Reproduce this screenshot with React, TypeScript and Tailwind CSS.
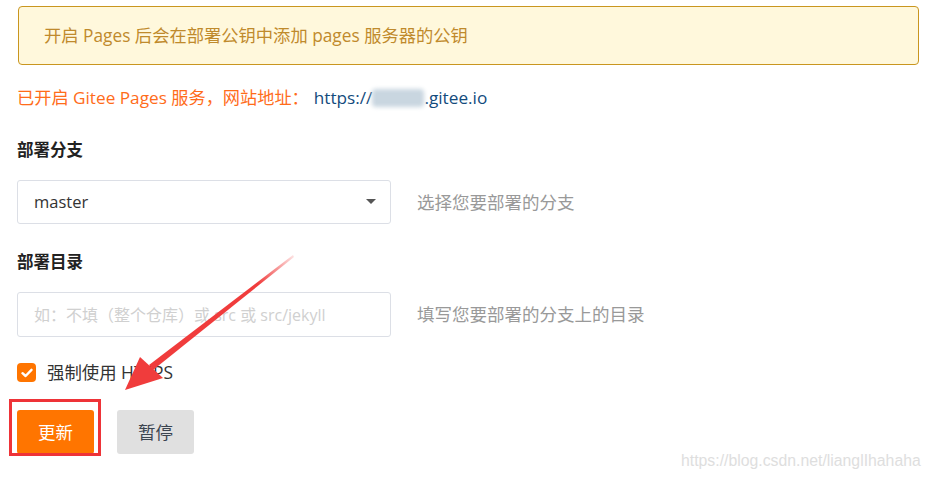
import React from "react";

const font = { fontFamily: '"Open Sans", "Noto Sans", "Noto Sans CJK SC", sans-serif' };

function Arrow() {
  return (
    <svg className="absolute left-0 top-0 pointer-events-none" width={931} height={478} viewBox="0 0 931 478">
      <defs>
        <linearGradient id="fade" x1="293" y1="255" x2="150" y2="368" gradientUnits="userSpaceOnUse">
          <stop offset="0" stopColor="#f03c3c" stopOpacity="0.15" />
          <stop offset="0.25" stopColor="#f03c3c" stopOpacity="1" />
          <stop offset="1" stopColor="#f03c3c" />
        </linearGradient>
      </defs>
      <polygon points="293,255 294,257 153,370 149,365" fill="url(#fade)" />
      <polygon points="125,390 140,357 163,378" fill="#f03c3c" />
    </svg>
  );
}

export default function App() {
  return (
    <div className="relative w-[931px] h-[478px] bg-white overflow-hidden" style={font}>
      <div className="flex flex-col pl-[17px] pr-[12px] pt-[6px]">
        {/* notice */}
        <div className="ml-px h-[59px] rounded-[4px] border border-[#c9961f] bg-[#fff8dc] flex items-center pl-[25px] text-[17.3px] text-[#bf8a2c]">
          开启 Pages 后会在部署公钥中添加 pages 服务器的公钥
        </div>

        {/* status */}
        <div className="mt-[21px] h-6 flex items-center text-[17.2px] leading-6">
          <span className="text-[#ff6c1a]">已开启 Gitee Pages 服务，网站地址：</span>
          <span className="ml-[5px] text-[#134b7d]">https://</span>
          <span className="inline-block w-[52px] h-[18px] bg-[#c9d6e0] blur-[2px] rounded-sm" />
          <span className="text-[#134b7d]">.gitee.io</span>
        </div>

        {/* branch */}
        <div className="mt-[28px] h-6 leading-6 text-[16.5px] font-bold text-[#222]">部署分支</div>
        <div className="mt-[18px] flex items-center">
          <div className="w-[374px] h-[44px] border border-[#dcdfe6] rounded-[3px] flex items-center justify-between pl-[16px] pr-[14px] text-[16.5px] text-[#333]">
            <span>master</span>
            <svg width="10" height="6" viewBox="0 0 10 6">
              <polygon points="0,0 10,0 5,5" fill="#555" />
            </svg>
          </div>
          <span className="ml-[26px] text-[17.5px] text-[#999]">选择您要部署的分支</span>
        </div>

        {/* directory */}
        <div className="mt-[26px] h-6 leading-6 text-[16.5px] font-bold text-[#222]">部署目录</div>
        <div className="mt-[18px] flex items-center">
          <div className="w-[374px] h-[45px] border border-[#dcdfe6] rounded-[3px] flex items-center pl-[16px] text-[16px] text-[#d0d0d0]">
            如：不填（整个仓库）或 src 或 src/jekyll
          </div>
          <span className="ml-[26px] text-[17.5px] text-[#999]">填写您要部署的分支上的目录</span>
        </div>

        {/* https */}
        <div className="mt-[26px] flex items-center h-[19px]">
          <div className="w-[19px] h-[19px] rounded-[4px] bg-[#ff7500] flex items-center justify-center">
            <svg width="12" height="10" viewBox="0 0 12 10">
              <path d="M1.5 5.2 L4.6 8 L10.5 1.8" stroke="#fff" strokeWidth="2.4" fill="none" strokeLinecap="round" strokeLinejoin="round" />
            </svg>
          </div>
          <span className="ml-[11px] text-[17.4px] text-[#333]">强制使用 HTTPS</span>
        </div>

        {/* actions */}
        <div className="mt-[28px] flex items-center gap-[23px]">
          <button className="w-[77px] h-[44px] rounded-[3px] bg-[#ff7500] text-white text-[17.5px]">更新</button>
          <button className="w-[77px] h-[44px] rounded-[3px] bg-[#e0e0e0] text-[#3c4550] text-[17.5px]">暂停</button>
        </div>
      </div>

      {/* annotations */}
      <div className="absolute left-[9px] top-[399px] w-[92px] h-[57px] border-[3px] border-[#ee3338]" />
      <Arrow />
      <div className="absolute left-[681px] top-[449px] text-[15.8px] text-[#dedede]" style={{ fontFamily: '"Liberation Sans", Arial, sans-serif' }}>
        https://blog.csdn.net/lianglIhahaha
      </div>
    </div>
  );
}
